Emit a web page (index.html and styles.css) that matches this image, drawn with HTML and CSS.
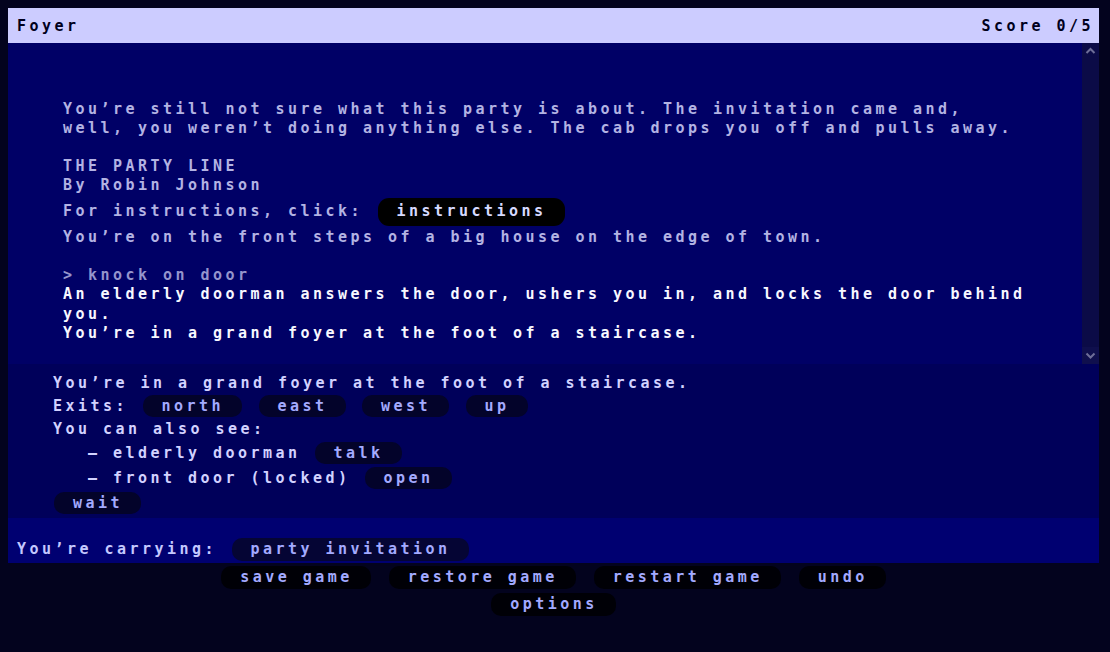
FILE: index.html
```html
<!DOCTYPE html>
<html lang="en">
<head>
<meta charset="utf-8">
<title>The Party Line</title>
<link rel="stylesheet" href="styles.css">
</head>
<body>
<div class="game">
  <header class="status-bar">
    <span class="location">Foyer</span>
    <span class="score">Score 0/5</span>
  </header>

  <div class="transcript-frame">
    <div class="transcript">
      <p class="intro">You’re still not sure what this party is about. The invitation came and, well, you weren’t doing anything else. The cab drops you off and pulls away.</p>
      <p class="title">THE PARTY LINE<br>By Robin Johnson</p>
      <p class="line-with-link">For instructions, click:<button class="link link-strong">instructions</button></p>
      <p class="intro-tail">You’re on the front steps of a big house on the edge of town.</p>
      <p class="command">&gt; knock on door</p>
      <p class="response">An elderly doorman answers the door, ushers you in, and locks the door behind you.<br>You’re in a grand foyer at the foot of a staircase.</p>
    </div>
    <div class="scrollbar">
      <svg class="scroll-arrow" viewBox="0 0 17 17" width="17" height="17"><polyline points="4.5,10 8.5,6 12.5,10" /></svg>
      <svg class="scroll-arrow" viewBox="0 0 17 17" width="17" height="17"><polyline points="4.5,6.5 8.5,10.5 12.5,6.5" /></svg>
    </div>
  </div>

  <section class="room">
    <div class="row">You’re in a grand foyer at the foot of a staircase.</div>
    <div class="row">Exits:<span class="btn-group"><button class="link">north</button><button class="link">east</button><button class="link">west</button><button class="link">up</button></span></div>
    <div class="row">You can also see:</div>
    <div class="row item">– elderly doorman<span class="btn-group"><button class="link">talk</button></span></div>
    <div class="row item">– front door (locked)<span class="btn-group"><button class="link">open</button></span></div>
    <div class="row tall"><button class="link first">wait</button></div>
  </section>

  <section class="inventory">
    <div class="row">You’re carrying:<span class="btn-group"><button class="link">party invitation</button></span></div>
  </section>

  <nav class="controls">
    <button class="link control">save game</button>
    <button class="link control">restore game</button>
    <button class="link control">restart game</button>
    <button class="link control">undo</button>
    <button class="link control">options</button>
  </nav>
</div>
</body>
</html>
```
FILE: styles.css
```css
html {
  background: #03031e;
}

body {
  margin: 8px 11px 8px 8px;
  background: #03031e;
  font-family: "DejaVu Sans Mono", "Liberation Mono", monospace;
  font-weight: bold;
  font-size: 15px;
  letter-spacing: 3.47px;
}

p {
  margin: 0;
}

/* top status line */
.status-bar {
  display: flex;
  justify-content: space-between;
  box-sizing: border-box;
  height: 35px;
  line-height: 33px;
  padding: 2px 5px 0 9px;
  background: #ccccff;
  color: #00001c;
}

/* scrolling story text */
.transcript-frame {
  display: flex;
  height: 321px;
  background: #000066;
}

.transcript {
  flex: 1;
  overflow: hidden;
  padding: 56.5px 50px 0 55px;
  line-height: 19.5px;
  color: #b3b3e3;
}

.title {
  margin-top: 18px;
}

.line-with-link {
  display: flex;
  align-items: center;
  height: 28px;
  margin-top: 2px;
}

.intro-tail {
  margin-top: 2.5px;
}

.command {
  margin-top: 18px;
  color: #9595cc;
}

.response {
  color: #f8f8ff;
}

.scrollbar {
  display: flex;
  flex-direction: column;
  justify-content: space-between;
  width: 17px;
  background: #0b0b47;
}

.scroll-arrow {
  display: block;
  fill: none;
  stroke: #6e6e98;
  stroke-width: 2;
}

.scroll-arrow:last-child {
  background: #0f0f4d;
}

/* clickable words */
.link {
  display: inline-flex;
  align-items: center;
  height: 22px;
  padding: 0 18px 0 19px;
  border: 0;
  border-radius: 10px;
  background: #03032a;
  color: #a3aaff;
  font: inherit;
  letter-spacing: inherit;
  cursor: pointer;
}

.link-strong {
  height: 28px;
  margin-left: 14.5px;
  border-radius: 11px;
  background: #000000;
  color: #d6daff;
}

.btn-group {
  display: inline-flex;
  gap: 16.5px;
  margin-left: 14.5px;
}

/* current room panel */
.room {
  height: 146px;
  padding: 7.5px 0 0 45px;
  background: #00005a;
  color: #d2d2ff;
}

.row {
  display: flex;
  align-items: center;
  height: 23px;
  white-space: pre;
}

.room .item {
  height: 25px;
  padding-left: 35px;
}

.room .item .btn-group {
  margin-left: 14px;
}

.room .tall {
  height: 25px;
}

.room .first {
  margin-left: 1px;
}

/* inventory strip */
.inventory {
  height: 45px;
  box-sizing: border-box;
  padding: 20px 0 0 9px;
  background: #000071;
  color: #c4c8ff;
}

.inventory .link {
  height: 23px;
  background: #050534;
}

/* game commands under the panel */
.controls {
  display: flex;
  flex-wrap: wrap;
  justify-content: center;
  gap: 4px 18px;
  max-width: 700px;
  margin: 3px auto 0;
}

.control {
  height: 23px;
  background: #000006;
}
```
